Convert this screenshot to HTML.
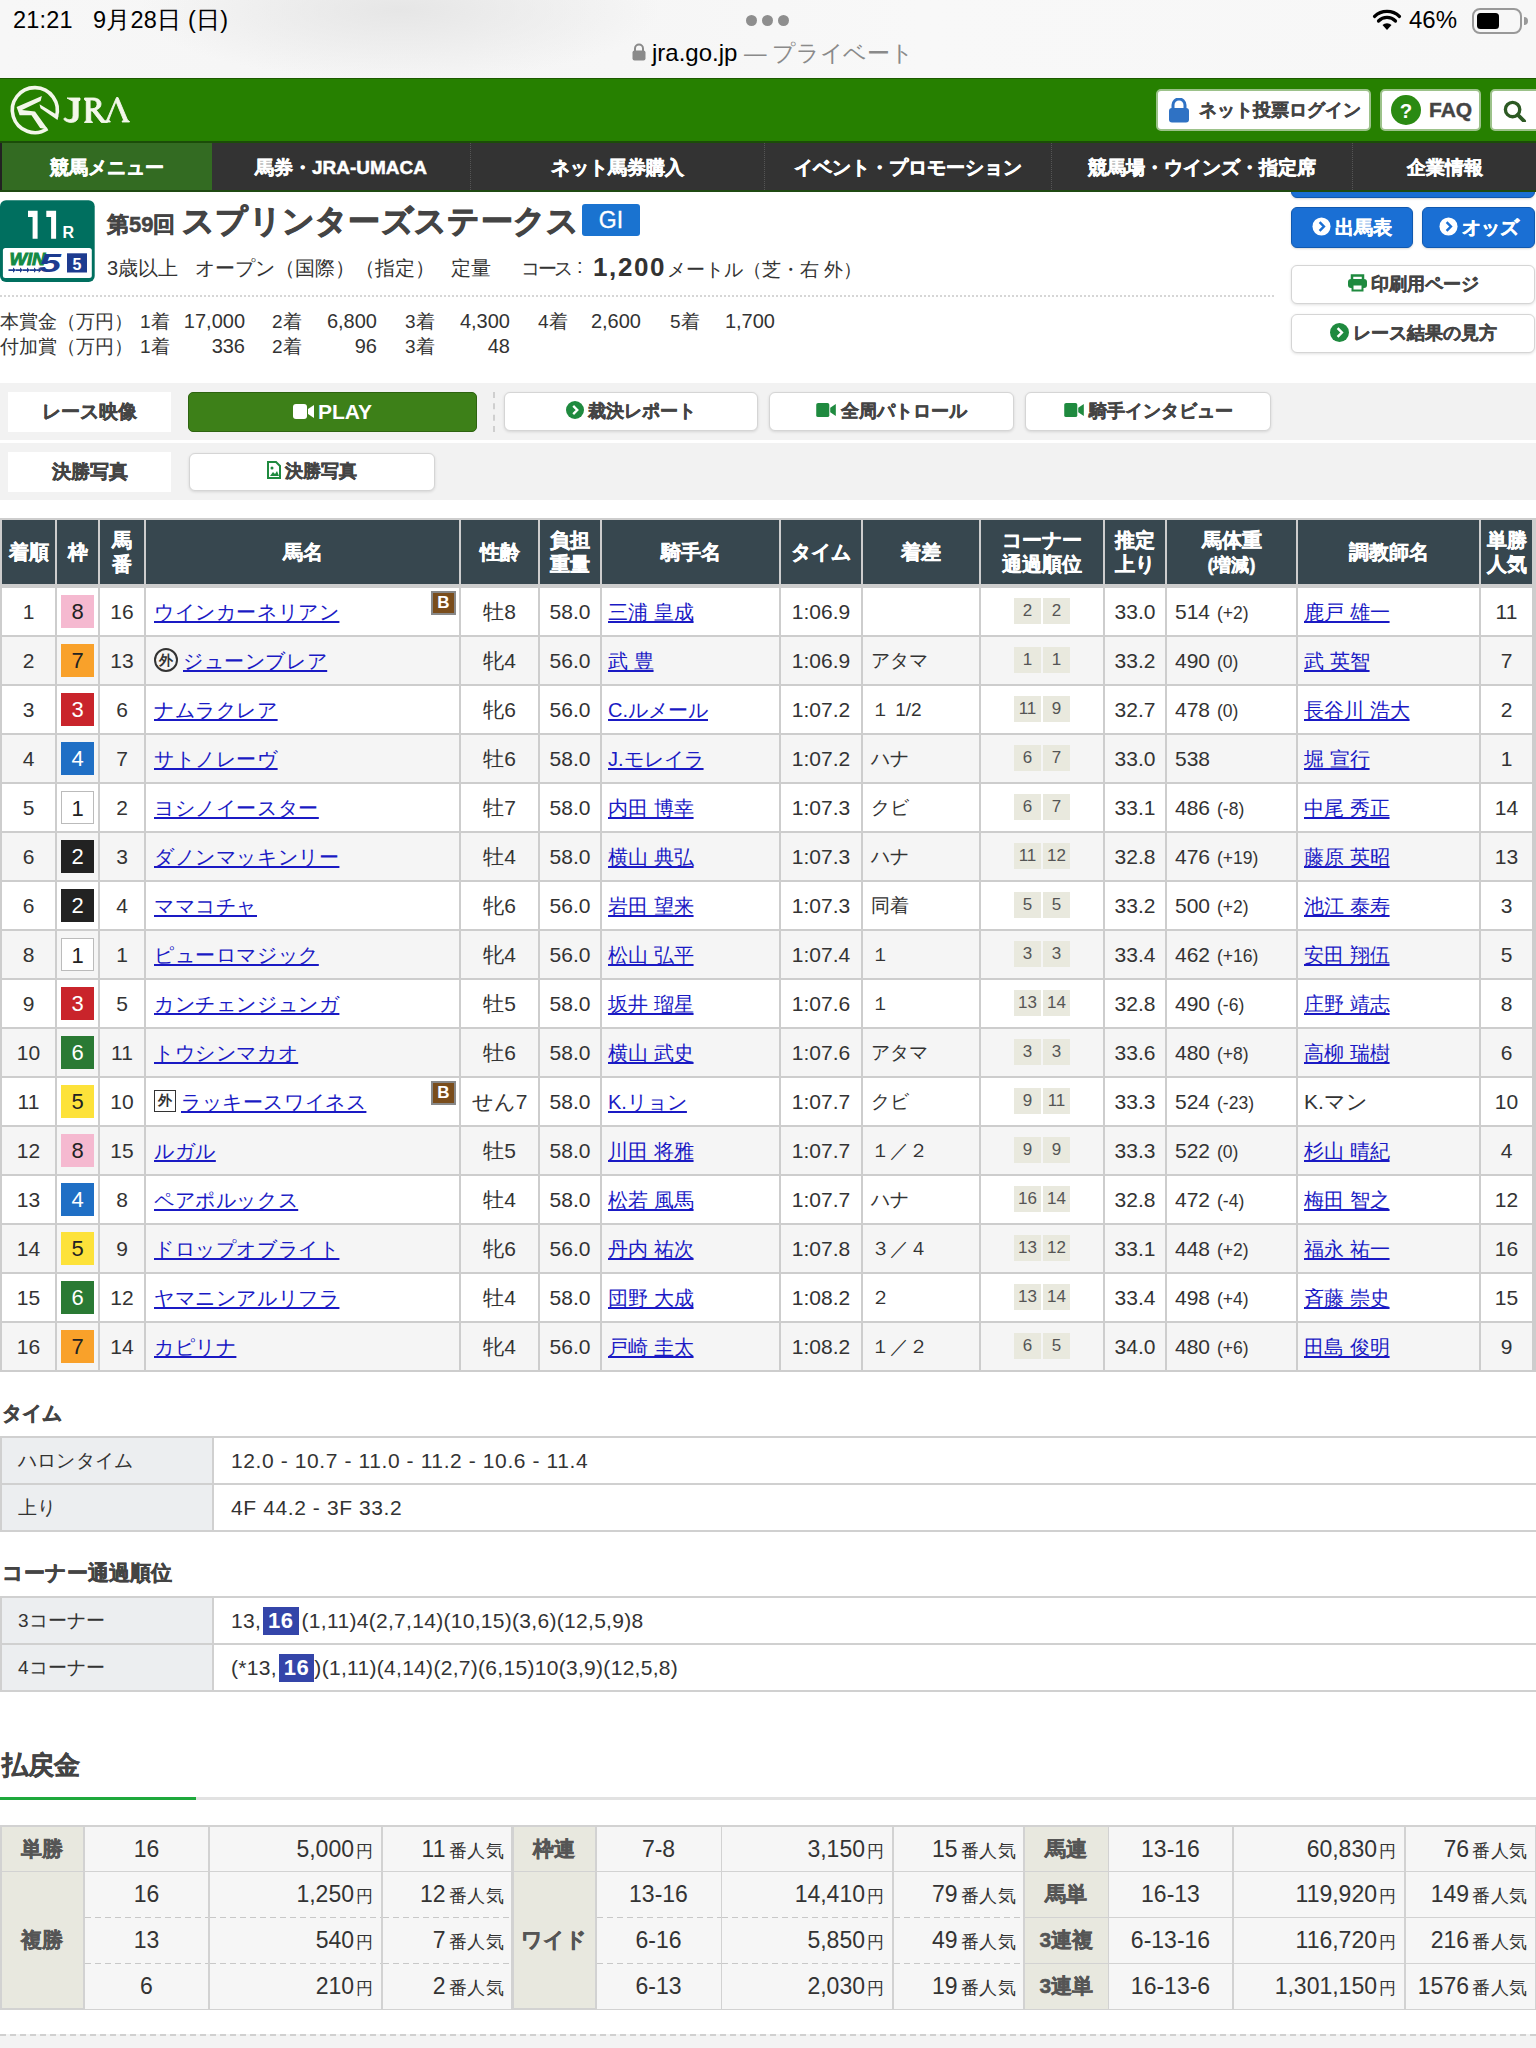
<!DOCTYPE html>
<html lang="ja"><head><meta charset="utf-8">
<style>
*{box-sizing:border-box;margin:0;padding:0}
html,body{width:1536px;height:2048px;overflow:hidden;background:#fff}
body{font-family:"Liberation Sans",sans-serif;color:#333;position:relative}
.abs{position:absolute}
/* status bar */
#sb{left:0;top:0;width:1536px;height:78px;background:radial-gradient(ellipse 260px 70px at 400px 10px,#e6e6e6 0%,rgba(246,246,246,0) 100%),linear-gradient(90deg,#f7f7f7 0%,#f5f5f5 30%,#f8f8f8 60%,#f7f7f7 100%)}
#sb .time{left:13px;top:4px;font-size:23.5px;color:#000;letter-spacing:0.2px}
#sb .dots{left:746px;top:15px;width:44px;height:10px}
#sb .dots i{position:absolute;top:0;width:11px;height:11px;border-radius:50%;background:#8e8e8e}
#sb .url{left:632px;top:38px;font-size:24px;color:#000;white-space:nowrap}
#sb .url span{color:#8a8a8a;font-size:22.5px;letter-spacing:-0.3px}
#sb .bat{right:10px;top:6px;font-size:24px;color:#000}
/* green header */
#gh{left:0;top:78px;width:1536px;height:65px;background:#268000;border-top:1px solid #1d5a00;border-bottom:2px solid #1b4d08}
.hbtn{position:absolute;top:10px;height:42px;background:#fff;border:2px solid #9cc28a;border-radius:5px;font-weight:bold;color:#444;font-size:19px;white-space:nowrap;-webkit-text-stroke:0.4px #444}
/* nav */
#nav{z-index:5;left:0;top:143px;width:1536px;height:49px;background:#333;border-bottom:2px solid #1f4a12}
#nav div{position:absolute;top:0;height:47px;line-height:49px;text-align:center;color:#fff;font-weight:bold;font-size:19px;white-space:nowrap;-webkit-text-stroke:0.5px #fff}
#nav div.sep{border-left:1px dotted #555}
#nav div.on{background:#336b22;border-left:2px solid #222}
/* race header */
#rbox{left:0;top:200px;width:95px;height:82px;background:#006f5f;border-radius:6px}
#rbox .num{left:0;top:4px;width:95px;text-align:center;color:#fff;font-weight:bold;font-size:38px;letter-spacing:-1px}
#rbox .num small{font-size:21px;letter-spacing:0;margin-left:5px}
#rbox .w5{left:3px;top:48px;width:89px;height:30px;background:#fff;border-radius:3px}
.bluebtn{position:absolute;height:41px;background:#1a6fd4;border:1px solid #1059b0;border-radius:6px;color:#fff;font-weight:bold;font-size:19px;text-align:center;line-height:39px;white-space:nowrap;-webkit-text-stroke:0.4px #fff;box-shadow:0 1px 2px rgba(0,0,0,.15)}
.whitebtn{position:absolute;height:39px;background:#fff;border:1.5px solid #d5d5d5;border-radius:6px;color:#444;font-weight:bold;font-size:18px;text-align:center;line-height:36px;white-space:nowrap;-webkit-text-stroke:0.4px #444;box-shadow:0 1px 3px rgba(0,0,0,.12)}
.ico{display:inline-block;vertical-align:middle;position:relative;top:-2px;margin-right:4px}
.info{font-size:20px;color:#333;white-space:nowrap}
.prize{font-size:19px;color:#333;white-space:nowrap;position:absolute}
/* video band */
.band{position:absolute;left:0;width:1536px;background:#f2f2f2}
.lbl{position:absolute;background:#fff;font-weight:bold;font-size:19px;color:#444;-webkit-text-stroke:0.4px #444;text-align:center;line-height:40px}
</style></head><body>
<style>
.tc{position:absolute;overflow:visible}
.th{position:absolute;left:0;right:0;top:50%;transform:translateY(-50%);text-align:center;color:#fff;font-weight:bold;font-size:20px;line-height:24px;white-space:nowrap;-webkit-text-stroke:0.4px #fff}
.tdc{position:absolute;left:0;right:0;top:0;height:47px;line-height:47px;text-align:center;font-size:21px;color:#333;white-space:nowrap}
.tdl{position:absolute;left:6px;top:0;height:47px;line-height:47px;font-size:21px;color:#333;white-space:nowrap}
.tc a{font-size:20px;color:#1a1ac4;text-decoration:underline;text-underline-offset:2px;text-decoration-thickness:2px}
.waku{position:absolute;left:4px;top:7px;width:33px;height:33px;line-height:33px;text-align:center;font-size:22px}
.bb{position:absolute;right:3px;top:3px;width:25px;height:24px;background:#7a4d1c;border:2px solid #888;color:#fff;font-weight:bold;font-size:17px;line-height:20px;text-align:center}
.maru{display:inline-block;width:24px;height:24px;border:2px solid #333;border-radius:50%;font-size:14px;line-height:20px;text-align:center;font-weight:bold;margin-right:5px;vertical-align:middle;position:relative;top:-2px}
.kaku{display:inline-block;width:22px;height:22px;border:1.5px solid #333;font-size:14px;line-height:19px;text-align:center;font-weight:bold;margin-right:5px;vertical-align:middle;position:relative;top:-2px}
.crn{position:absolute;left:33px;top:10px;height:26px}
.crn i{font-style:normal;float:left;width:27px;height:26px;margin-right:2px;background:#e9e9de;font-size:17px;line-height:26px;text-align:center;color:#555}
.bwd{font-size:17.5px;margin-left:7px}
</style>
<div id="sb" class="abs">
  <div class="abs time">21:21&nbsp;&nbsp;&nbsp;9月28日 (日)</div>
  <div class="abs dots"><i style="left:0"></i><i style="left:16px"></i><i style="left:32px"></i></div>
  <div class="abs url"><svg class="ico" width="14" height="18" viewBox="0 0 14 18" style="top:-3px;margin-right:6px"><path d="M3 8V5.5a4 4 0 0 1 8 0V8" fill="none" stroke="#8a8a8a" stroke-width="2"/><rect x="0.5" y="7.5" width="13" height="10" rx="2" fill="#8a8a8a"/></svg>jra.go.jp <span>— プライベート</span></div>
  <svg class="abs" style="left:1372px;top:9px" width="30" height="22" viewBox="0 0 30 22"><path d="M15 21l-4.5-5a6.5 6.5 0 0 1 9 0z" fill="#000"/><path d="M6.5 12a12 12 0 0 1 17 0" fill="none" stroke="#000" stroke-width="3.2" stroke-linecap="round"/><path d="M2.5 7.5a18 18 0 0 1 25 0" fill="none" stroke="#000" stroke-width="3.2" stroke-linecap="round"/></svg>
  <div class="abs" style="left:1409px;top:6px;font-size:24px;color:#000">46%</div>
  <svg class="abs" style="left:1472px;top:8px" width="56" height="26" viewBox="0 0 56 26"><rect x="1" y="1" width="48" height="24" rx="7" fill="none" stroke="#999" stroke-width="2"/><rect x="5" y="5" width="22" height="16" rx="3.5" fill="#000"/><path d="M52 9v8a3 3 0 0 0 0-8z" fill="#999"/></svg>
</div>

<div id="gh" class="abs">
  <svg class="abs" style="left:0;top:0px" width="140" height="62" viewBox="0 79 140 62">
    <path d="M56.2 117.2 A22.5 22.5 0 1 0 47.4 128.8" fill="none" stroke="#f3f7ea" stroke-width="3.6"/>
    <path d="M39.5 104.2 L58.5 115.8 L57.5 120 L40.5 108.2Z" fill="#f3f7ea"/>
    <path d="M41.9 96 L40.6 101 L22 110 L35 111.5 L48 129.5 L40.1 128 L31.5 115.3 L19.6 115.3 L16.6 107Z" fill="#f3f7ea"/>
    <g stroke="#f3f7ea" stroke-width="0.9" stroke-linejoin="round"><path d="M67 98h13v2.2l-1.8 1v15c0 4-3 6.2-7 6.2-3 0-6-1.2-7.5-3.2l1.2-1.5c1.3 1.2 3 2 4.6 2 2.4 0 3.6-1.4 3.6-4.2V101.2l-2.1-1Z" fill="#f3f7ea"/>
    <path d="M84.5 98h8.5c5 0 8 2.3 8 6 0 3-2 5-5 5.8l8.3 10.5 3 1.7v.5h-6l-9-11.6h-1.6v9.6l1.8 1.5v.5h-8v-.5l1.8-1.5V101.2l-1.8-1.5Zm5.6 2v8.7h2c3.2 0 5-1.6 5-4.4 0-2.8-1.7-4.3-5-4.3Z" fill="#f3f7ea"/>
    <path d="M116.5 97.5h1.5l9.5 22.5 2 1.5v.5h-7.5v-.5l1.6-1.5-7.6-18.5-7.3 18.5 1.6 1.5v.5h-5.3v-.5l1.8-1.5Z" fill="#f3f7ea"/></g>
  </svg>
  <div class="hbtn" style="left:1156px;width:215px;padding-left:41px;line-height:38px;font-size:17.5px">
    <svg class="abs" style="left:10px;top:7px" width="22" height="25" viewBox="0 0 22 25"><path d="M5 11V7a6 6 0 0 1 12 0v4" fill="none" stroke="#2f72c4" stroke-width="3"/><rect x="1" y="10" width="20" height="14.5" rx="3" fill="#2f72c4"/></svg>ネット投票ログイン</div>
  <div class="hbtn" style="left:1380px;width:101px;padding-left:47px;line-height:38px;font-size:21px">
    <svg class="abs" style="left:9px;top:4px" width="30" height="30" viewBox="0 0 28 28"><circle cx="14" cy="14" r="14" fill="#2a8a12"/><text x="14" y="21" text-anchor="middle" font-family="Liberation Sans" font-weight="bold" font-size="19" fill="#fff">?</text></svg>FAQ</div>
  <div class="hbtn" style="left:1490px;width:50px">
    <svg class="abs" style="left:10px;top:8px" width="25" height="23" viewBox="0 0 26 24"><circle cx="11" cy="11" r="7.5" fill="none" stroke="#2d5a24" stroke-width="3.5"/><path d="M16.5 16.5L23 23" stroke="#2d5a24" stroke-width="4" stroke-linecap="round"/></svg></div>
</div>

<div id="nav" class="abs">
  <div class="on" style="left:0;width:212px">競馬メニュー</div>
  <div style="left:212px;width:258px">馬券・JRA-UMACA</div>
  <div class="sep" style="left:470px;width:294px">ネット馬券購入</div>
  <div class="sep" style="left:764px;width:287px">イベント・プロモーション</div>
  <div class="sep" style="left:1051px;width:301px">競馬場・ウインズ・指定席</div>
  <div class="sep" style="left:1352px;width:184px">企業情報</div>
</div>
<div class="bluebtn" style="left:1291px;top:188px;width:244px;height:10px;border-radius:0 0 6px 6px"></div>
<svg class="abs" style="left:0;top:198px" width="100" height="88" viewBox="0 198 100 88">
  <rect x="0" y="200.3" width="94.7" height="81.7" rx="6" fill="#006f5f"/>
  <path d="M28 210.7H37.6V238.7H32.6V216.9H28Z M46.3 210.7H56.1V238.7H51.1V216.9H46.3Z" fill="#fff"/>
  <text x="62.5" y="238.3" font-family="Liberation Sans" font-weight="bold" font-size="16" fill="#fff">R</text>
  <rect x="2.9" y="248" width="88.9" height="30" rx="2.5" fill="#fff"/>
  <text x="9.5" y="265.2" font-family="Liberation Sans" font-weight="bold" font-style="italic" font-size="16.5" fill="#138a45" stroke="#138a45" stroke-width="0.9" textLength="36" lengthAdjust="spacingAndGlyphs">WIN</text>
  <text x="39" y="272.3" font-family="Liberation Sans" font-weight="bold" font-style="italic" font-size="26" fill="#1d3b8f" textLength="22" lengthAdjust="spacingAndGlyphs">5</text>
  <g fill="#1d3b8f"><path d="M8.5 269.3h4.5v-1.8l2.8 2.6-2.8 2.6v-1.8H8.5Z"/><path d="M15.5 269.3h4.5v-1.8l2.8 2.6-2.8 2.6v-1.8h-4.5Z"/><path d="M22.5 269.3h4.5v-1.8l2.8 2.6-2.8 2.6v-1.8h-4.5Z"/><path d="M29.5 269.3h4.5v-1.8l2.8 2.6-2.8 2.6v-1.8h-4.5Z"/><path d="M36.2 269.3h2.5v-1.8l2.8 2.6-2.8 2.6v-1.8h-2.5Z"/></g>
  <rect x="67" y="253.3" width="20" height="19.2" fill="#1d3b8f"/>
  <text x="77" y="269.6" text-anchor="middle" font-family="Liberation Sans" font-weight="bold" font-size="16" fill="#fff">5</text>
</svg>
<div class="abs" style="left:107px;top:210px;font-size:22px;font-weight:bold;color:#444;white-space:nowrap;-webkit-text-stroke:0.5px #444">第59回</div>
<div class="abs" style="left:182px;top:200px;font-size:32px;font-weight:bold;color:#444;white-space:nowrap;letter-spacing:0.3px;-webkit-text-stroke:1px #444">スプリンターズステークス</div>
<div class="abs" style="left:582px;top:204px;width:58px;height:32px;background:#1a73d0;border-radius:3px;color:#fff;font-size:23px;text-align:center;line-height:32px;-webkit-text-stroke:0.3px #fff">GI</div>
<div class="abs info" style="left:107px;top:255px">3歳以上&nbsp;&nbsp;&nbsp;オープン（国際）（指定）&nbsp;&nbsp;&nbsp;定量</div>
<div class="abs info" style="left:521px;top:256px;font-size:19px;letter-spacing:-2.5px">コース</div><div class="abs info" style="left:577px;top:255px">:</div>
<div class="abs" style="left:593px;top:252px;font-size:26px;font-weight:bold;color:#333;letter-spacing:1.6px">1,200</div>
<div class="abs info" style="left:667px;top:257px;font-size:19px">メートル（芝・右 外）</div>
<div class="abs" style="left:0;top:295px;width:1275px;height:0;height:2px;background:repeating-linear-gradient(90deg,#d6d6d6 0 2px,transparent 2px 4px)"></div>

<div class="prize" style="left:0;top:309px">本賞金（万円）</div>
<div class="prize" style="left:0;top:334px">付加賞（万円）</div>
<div class="prize" style="left:140px;top:309px">1着</div><div class="prize" style="left:165px;width:80px;top:310px;text-align:right;font-size:20px">17,000</div>
<div class="prize" style="left:272px;top:309px">2着</div><div class="prize" style="left:297px;width:80px;top:310px;text-align:right;font-size:20px">6,800</div>
<div class="prize" style="left:405px;top:309px">3着</div><div class="prize" style="left:430px;width:80px;top:310px;text-align:right;font-size:20px">4,300</div>
<div class="prize" style="left:538px;top:309px">4着</div><div class="prize" style="left:561px;width:80px;top:310px;text-align:right;font-size:20px">2,600</div>
<div class="prize" style="left:670px;top:309px">5着</div><div class="prize" style="left:695px;width:80px;top:310px;text-align:right;font-size:20px">1,700</div>
<div class="prize" style="left:140px;top:334px">1着</div><div class="prize" style="left:165px;width:80px;top:335px;text-align:right;font-size:20px">336</div>
<div class="prize" style="left:272px;top:334px">2着</div><div class="prize" style="left:297px;width:80px;top:335px;text-align:right;font-size:20px">96</div>
<div class="prize" style="left:405px;top:334px">3着</div><div class="prize" style="left:430px;width:80px;top:335px;text-align:right;font-size:20px">48</div>

<div class="bluebtn" style="left:1291px;top:207px;width:122px">
  <svg class="ico" width="19" height="19" viewBox="0 0 20 20"><circle cx="10" cy="10" r="9.5" fill="#fff"/><path d="M8 5.5L12.5 10L8 14.5" fill="none" stroke="#1a6fd4" stroke-width="2.6"/></svg>出馬表</div>
<div class="bluebtn" style="left:1422px;top:207px;width:113px">
  <svg class="ico" width="19" height="19" viewBox="0 0 20 20"><circle cx="10" cy="10" r="9.5" fill="#fff"/><path d="M8 5.5L12.5 10L8 14.5" fill="none" stroke="#1a6fd4" stroke-width="2.6"/></svg>オッズ</div>
<div class="whitebtn" style="left:1291px;top:265px;width:244px">
  <svg class="ico" width="19" height="18" viewBox="0 0 19 18"><path d="M4 5V1.5h11V5" fill="none" stroke="#1f8a3f" stroke-width="2.5"/><rect x="0" y="5" width="19" height="9" rx="3" fill="#1f8a3f"/><rect x="4.5" y="10.5" width="10" height="6" fill="#fff" stroke="#1f8a3f" stroke-width="2"/></svg>印刷用ページ</div>
<div class="whitebtn" style="left:1291px;top:314px;width:244px">
  <svg class="ico" width="19" height="19" viewBox="0 0 20 20"><circle cx="10" cy="10" r="10" fill="#1f8a3f"/><path d="M8 5.5L12.5 10L8 14.5" fill="none" stroke="#fff" stroke-width="2.6"/></svg>レース結果の見方</div>

<div class="band" style="top:383px;height:57px"></div>
<div class="band" style="top:443px;height:57px"></div>
<div class="lbl" style="left:8px;top:392px;width:163px;height:40px">レース映像</div>
<div class="lbl" style="left:8px;top:452px;width:163px;height:40px">決勝写真</div>
<div class="abs" style="left:188px;top:392px;width:289px;height:40px;background:#3d8018;border:1px solid #2d6310;border-radius:5px;color:#fff;font-weight:bold;font-size:21px;text-align:center;line-height:38px">
  <svg class="ico" width="22" height="15" viewBox="0 0 22 15" style="top:-2px;margin-right:3px"><rect x="0" y="0" width="14" height="15" rx="3" fill="#fff"/><path d="M15 5L21 1v13l-6-4z" fill="#fff"/></svg>PLAY</div>
<div class="abs" style="left:493px;top:392px;height:40px;border-left:2px dashed #cfcfcf"></div>
<div class="whitebtn" style="left:504px;top:392px;width:254px">
  <svg class="ico" width="18" height="18" viewBox="0 0 20 20"><circle cx="10" cy="10" r="10" fill="#1f8a3f"/><path d="M8 5.5L12.5 10L8 14.5" fill="none" stroke="#fff" stroke-width="2.6"/></svg>裁決レポート</div>
<div class="whitebtn" style="left:769px;top:392px;width:245px">
  <svg class="ico" width="21" height="14" viewBox="0 0 22 15"><rect x="0" y="0" width="14" height="15" rx="2" fill="#1f8a3f"/><path d="M15 5L21 1v13l-6-4z" fill="#1f8a3f"/></svg>全周パトロール</div>
<div class="whitebtn" style="left:1025px;top:392px;width:246px">
  <svg class="ico" width="21" height="14" viewBox="0 0 22 15"><rect x="0" y="0" width="14" height="15" rx="2" fill="#1f8a3f"/><path d="M15 5L21 1v13l-6-4z" fill="#1f8a3f"/></svg>騎手インタビュー</div>
<div class="whitebtn" style="left:189px;top:453px;width:246px;height:38px;line-height:35px">
  <svg class="ico" width="14" height="18" viewBox="0 0 14 18"><path d="M1 1h8l4 4v12H1z" fill="#fff" stroke="#1f8a3f" stroke-width="2"/><path d="M3 15l3-4 2 2 2-3 2 5z" fill="#1f8a3f"/><circle cx="5" cy="7" r="1.5" fill="#1f8a3f"/></svg>決勝写真</div>
<div class="abs" style="left:0;top:518px;width:1536px;height:854px;background:#cdcdcd"></div>
<div class="tc" style="left:2px;top:520px;width:53px;height:64px;background:#37474f;"><div class="th">着順</div></div>
<div class="tc" style="left:57px;top:520px;width:41px;height:64px;background:#37474f;"><div class="th">枠</div></div>
<div class="tc" style="left:100px;top:520px;width:44px;height:64px;background:#37474f;"><div class="th">馬<br>番</div></div>
<div class="tc" style="left:146px;top:520px;width:313px;height:64px;background:#37474f;"><div class="th">馬名</div></div>
<div class="tc" style="left:461px;top:520px;width:77px;height:64px;background:#37474f;"><div class="th">性齢</div></div>
<div class="tc" style="left:540px;top:520px;width:60px;height:64px;background:#37474f;"><div class="th">負担<br>重量</div></div>
<div class="tc" style="left:602px;top:520px;width:177px;height:64px;background:#37474f;"><div class="th">騎手名</div></div>
<div class="tc" style="left:781px;top:520px;width:80px;height:64px;background:#37474f;"><div class="th">タイム</div></div>
<div class="tc" style="left:863px;top:520px;width:116px;height:64px;background:#37474f;"><div class="th">着差</div></div>
<div class="tc" style="left:981px;top:520px;width:122px;height:64px;background:#37474f;"><div class="th">コーナー<br>通過順位</div></div>
<div class="tc" style="left:1105px;top:520px;width:60px;height:64px;background:#37474f;"><div class="th">推定<br>上り</div></div>
<div class="tc" style="left:1167px;top:520px;width:129px;height:64px;background:#37474f;"><div class="th">馬体重<br><span style="font-size:18px">(増減)</span></div></div>
<div class="tc" style="left:1298px;top:520px;width:181px;height:64px;background:#37474f;"><div class="th">調教師名</div></div>
<div class="tc" style="left:1481px;top:520px;width:51px;height:64px;background:#37474f;"><div class="th">単勝<br>人気</div></div>
<div class="tc" style="left:2px;top:588px;width:53px;height:47px;background:#fff;"><div class="tdc">1</div></div>
<div class="tc" style="left:57px;top:588px;width:41px;height:47px;background:#fff;"><div class="waku" style="background:#f5b9d0;color:#222;">8</div></div>
<div class="tc" style="left:100px;top:588px;width:44px;height:47px;background:#fff;"><div class="tdc">16</div></div>
<div class="tc" style="left:146px;top:588px;width:313px;height:47px;background:#fff;"><div class="tdl" style="left:8px"><a style="letter-spacing:0.6px">ウインカーネリアン </a></div><span class="bb">B</span></div>
<div class="tc" style="left:461px;top:588px;width:77px;height:47px;background:#fff;"><div class="tdc">牡8</div></div>
<div class="tc" style="left:540px;top:588px;width:60px;height:47px;background:#fff;"><div class="tdc">58.0</div></div>
<div class="tc" style="left:602px;top:588px;width:177px;height:47px;background:#fff;"><div class="tdl"><a>三浦 皇成</a></div></div>
<div class="tc" style="left:781px;top:588px;width:80px;height:47px;background:#fff;"><div class="tdc">1:06.9</div></div>
<div class="tc" style="left:863px;top:588px;width:116px;height:47px;background:#fff;"><div class="tdl" style="left:8px;font-size:19px"></div></div>
<div class="tc" style="left:981px;top:588px;width:122px;height:47px;background:#fff;"><div class="crn"><i>2</i><i>2</i></div></div>
<div class="tc" style="left:1105px;top:588px;width:60px;height:47px;background:#fff;"><div class="tdc">33.0</div></div>
<div class="tc" style="left:1167px;top:588px;width:129px;height:47px;background:#fff;"><div class="tdl" style="left:8px">514<span class="bwd">(+2)</span></div></div>
<div class="tc" style="left:1298px;top:588px;width:181px;height:47px;background:#fff;"><div class="tdl"><a>鹿戸 雄一</a></div></div>
<div class="tc" style="left:1481px;top:588px;width:51px;height:47px;background:#fff;"><div class="tdc">11</div></div>
<div class="tc" style="left:2px;top:637px;width:53px;height:47px;background:#f5f5f5;"><div class="tdc">2</div></div>
<div class="tc" style="left:57px;top:637px;width:41px;height:47px;background:#f5f5f5;"><div class="waku" style="background:#f9a12a;color:#222;">7</div></div>
<div class="tc" style="left:100px;top:637px;width:44px;height:47px;background:#f5f5f5;"><div class="tdc">13</div></div>
<div class="tc" style="left:146px;top:637px;width:313px;height:47px;background:#f5f5f5;"><div class="tdl" style="left:8px"><span class="maru">外</span><a style="letter-spacing:0.6px">ジューンブレア </a></div></div>
<div class="tc" style="left:461px;top:637px;width:77px;height:47px;background:#f5f5f5;"><div class="tdc">牝4</div></div>
<div class="tc" style="left:540px;top:637px;width:60px;height:47px;background:#f5f5f5;"><div class="tdc">56.0</div></div>
<div class="tc" style="left:602px;top:637px;width:177px;height:47px;background:#f5f5f5;"><div class="tdl"><a>武 豊</a></div></div>
<div class="tc" style="left:781px;top:637px;width:80px;height:47px;background:#f5f5f5;"><div class="tdc">1:06.9</div></div>
<div class="tc" style="left:863px;top:637px;width:116px;height:47px;background:#f5f5f5;"><div class="tdl" style="left:8px;font-size:19px">アタマ</div></div>
<div class="tc" style="left:981px;top:637px;width:122px;height:47px;background:#f5f5f5;"><div class="crn"><i>1</i><i>1</i></div></div>
<div class="tc" style="left:1105px;top:637px;width:60px;height:47px;background:#f5f5f5;"><div class="tdc">33.2</div></div>
<div class="tc" style="left:1167px;top:637px;width:129px;height:47px;background:#f5f5f5;"><div class="tdl" style="left:8px">490<span class="bwd">(0)</span></div></div>
<div class="tc" style="left:1298px;top:637px;width:181px;height:47px;background:#f5f5f5;"><div class="tdl"><a>武 英智</a></div></div>
<div class="tc" style="left:1481px;top:637px;width:51px;height:47px;background:#f5f5f5;"><div class="tdc">7</div></div>
<div class="tc" style="left:2px;top:686px;width:53px;height:47px;background:#fff;"><div class="tdc">3</div></div>
<div class="tc" style="left:57px;top:686px;width:41px;height:47px;background:#fff;"><div class="waku" style="background:#c9242b;color:#fff;">3</div></div>
<div class="tc" style="left:100px;top:686px;width:44px;height:47px;background:#fff;"><div class="tdc">6</div></div>
<div class="tc" style="left:146px;top:686px;width:313px;height:47px;background:#fff;"><div class="tdl" style="left:8px"><a style="letter-spacing:0.6px">ナムラクレア </a></div></div>
<div class="tc" style="left:461px;top:686px;width:77px;height:47px;background:#fff;"><div class="tdc">牝6</div></div>
<div class="tc" style="left:540px;top:686px;width:60px;height:47px;background:#fff;"><div class="tdc">56.0</div></div>
<div class="tc" style="left:602px;top:686px;width:177px;height:47px;background:#fff;"><div class="tdl"><a>C.ルメール</a></div></div>
<div class="tc" style="left:781px;top:686px;width:80px;height:47px;background:#fff;"><div class="tdc">1:07.2</div></div>
<div class="tc" style="left:863px;top:686px;width:116px;height:47px;background:#fff;"><div class="tdl" style="left:8px;font-size:19px">１ 1/2</div></div>
<div class="tc" style="left:981px;top:686px;width:122px;height:47px;background:#fff;"><div class="crn"><i>11</i><i>9</i></div></div>
<div class="tc" style="left:1105px;top:686px;width:60px;height:47px;background:#fff;"><div class="tdc">32.7</div></div>
<div class="tc" style="left:1167px;top:686px;width:129px;height:47px;background:#fff;"><div class="tdl" style="left:8px">478<span class="bwd">(0)</span></div></div>
<div class="tc" style="left:1298px;top:686px;width:181px;height:47px;background:#fff;"><div class="tdl"><a>長谷川 浩大</a></div></div>
<div class="tc" style="left:1481px;top:686px;width:51px;height:47px;background:#fff;"><div class="tdc">2</div></div>
<div class="tc" style="left:2px;top:735px;width:53px;height:47px;background:#f5f5f5;"><div class="tdc">4</div></div>
<div class="tc" style="left:57px;top:735px;width:41px;height:47px;background:#f5f5f5;"><div class="waku" style="background:#1f6fc5;color:#fff;">4</div></div>
<div class="tc" style="left:100px;top:735px;width:44px;height:47px;background:#f5f5f5;"><div class="tdc">7</div></div>
<div class="tc" style="left:146px;top:735px;width:313px;height:47px;background:#f5f5f5;"><div class="tdl" style="left:8px"><a style="letter-spacing:0.6px">サトノレーヴ </a></div></div>
<div class="tc" style="left:461px;top:735px;width:77px;height:47px;background:#f5f5f5;"><div class="tdc">牡6</div></div>
<div class="tc" style="left:540px;top:735px;width:60px;height:47px;background:#f5f5f5;"><div class="tdc">58.0</div></div>
<div class="tc" style="left:602px;top:735px;width:177px;height:47px;background:#f5f5f5;"><div class="tdl"><a>J.モレイラ</a></div></div>
<div class="tc" style="left:781px;top:735px;width:80px;height:47px;background:#f5f5f5;"><div class="tdc">1:07.2</div></div>
<div class="tc" style="left:863px;top:735px;width:116px;height:47px;background:#f5f5f5;"><div class="tdl" style="left:8px;font-size:19px">ハナ</div></div>
<div class="tc" style="left:981px;top:735px;width:122px;height:47px;background:#f5f5f5;"><div class="crn"><i>6</i><i>7</i></div></div>
<div class="tc" style="left:1105px;top:735px;width:60px;height:47px;background:#f5f5f5;"><div class="tdc">33.0</div></div>
<div class="tc" style="left:1167px;top:735px;width:129px;height:47px;background:#f5f5f5;"><div class="tdl" style="left:8px">538<span class="bwd"></span></div></div>
<div class="tc" style="left:1298px;top:735px;width:181px;height:47px;background:#f5f5f5;"><div class="tdl"><a>堀 宣行</a></div></div>
<div class="tc" style="left:1481px;top:735px;width:51px;height:47px;background:#f5f5f5;"><div class="tdc">1</div></div>
<div class="tc" style="left:2px;top:784px;width:53px;height:47px;background:#fff;"><div class="tdc">5</div></div>
<div class="tc" style="left:57px;top:784px;width:41px;height:47px;background:#fff;"><div class="waku" style="background:#fff;color:#222;border:1px solid #bbb;">1</div></div>
<div class="tc" style="left:100px;top:784px;width:44px;height:47px;background:#fff;"><div class="tdc">2</div></div>
<div class="tc" style="left:146px;top:784px;width:313px;height:47px;background:#fff;"><div class="tdl" style="left:8px"><a style="letter-spacing:0.6px">ヨシノイースター </a></div></div>
<div class="tc" style="left:461px;top:784px;width:77px;height:47px;background:#fff;"><div class="tdc">牡7</div></div>
<div class="tc" style="left:540px;top:784px;width:60px;height:47px;background:#fff;"><div class="tdc">58.0</div></div>
<div class="tc" style="left:602px;top:784px;width:177px;height:47px;background:#fff;"><div class="tdl"><a>内田 博幸</a></div></div>
<div class="tc" style="left:781px;top:784px;width:80px;height:47px;background:#fff;"><div class="tdc">1:07.3</div></div>
<div class="tc" style="left:863px;top:784px;width:116px;height:47px;background:#fff;"><div class="tdl" style="left:8px;font-size:19px">クビ</div></div>
<div class="tc" style="left:981px;top:784px;width:122px;height:47px;background:#fff;"><div class="crn"><i>6</i><i>7</i></div></div>
<div class="tc" style="left:1105px;top:784px;width:60px;height:47px;background:#fff;"><div class="tdc">33.1</div></div>
<div class="tc" style="left:1167px;top:784px;width:129px;height:47px;background:#fff;"><div class="tdl" style="left:8px">486<span class="bwd">(-8)</span></div></div>
<div class="tc" style="left:1298px;top:784px;width:181px;height:47px;background:#fff;"><div class="tdl"><a>中尾 秀正</a></div></div>
<div class="tc" style="left:1481px;top:784px;width:51px;height:47px;background:#fff;"><div class="tdc">14</div></div>
<div class="tc" style="left:2px;top:833px;width:53px;height:47px;background:#f5f5f5;"><div class="tdc">6</div></div>
<div class="tc" style="left:57px;top:833px;width:41px;height:47px;background:#f5f5f5;"><div class="waku" style="background:#222;color:#fff;">2</div></div>
<div class="tc" style="left:100px;top:833px;width:44px;height:47px;background:#f5f5f5;"><div class="tdc">3</div></div>
<div class="tc" style="left:146px;top:833px;width:313px;height:47px;background:#f5f5f5;"><div class="tdl" style="left:8px"><a style="letter-spacing:0.6px">ダノンマッキンリー </a></div></div>
<div class="tc" style="left:461px;top:833px;width:77px;height:47px;background:#f5f5f5;"><div class="tdc">牡4</div></div>
<div class="tc" style="left:540px;top:833px;width:60px;height:47px;background:#f5f5f5;"><div class="tdc">58.0</div></div>
<div class="tc" style="left:602px;top:833px;width:177px;height:47px;background:#f5f5f5;"><div class="tdl"><a>横山 典弘</a></div></div>
<div class="tc" style="left:781px;top:833px;width:80px;height:47px;background:#f5f5f5;"><div class="tdc">1:07.3</div></div>
<div class="tc" style="left:863px;top:833px;width:116px;height:47px;background:#f5f5f5;"><div class="tdl" style="left:8px;font-size:19px">ハナ</div></div>
<div class="tc" style="left:981px;top:833px;width:122px;height:47px;background:#f5f5f5;"><div class="crn"><i>11</i><i>12</i></div></div>
<div class="tc" style="left:1105px;top:833px;width:60px;height:47px;background:#f5f5f5;"><div class="tdc">32.8</div></div>
<div class="tc" style="left:1167px;top:833px;width:129px;height:47px;background:#f5f5f5;"><div class="tdl" style="left:8px">476<span class="bwd">(+19)</span></div></div>
<div class="tc" style="left:1298px;top:833px;width:181px;height:47px;background:#f5f5f5;"><div class="tdl"><a>藤原 英昭</a></div></div>
<div class="tc" style="left:1481px;top:833px;width:51px;height:47px;background:#f5f5f5;"><div class="tdc">13</div></div>
<div class="tc" style="left:2px;top:882px;width:53px;height:47px;background:#fff;"><div class="tdc">6</div></div>
<div class="tc" style="left:57px;top:882px;width:41px;height:47px;background:#fff;"><div class="waku" style="background:#222;color:#fff;">2</div></div>
<div class="tc" style="left:100px;top:882px;width:44px;height:47px;background:#fff;"><div class="tdc">4</div></div>
<div class="tc" style="left:146px;top:882px;width:313px;height:47px;background:#fff;"><div class="tdl" style="left:8px"><a style="letter-spacing:0.6px">ママコチャ </a></div></div>
<div class="tc" style="left:461px;top:882px;width:77px;height:47px;background:#fff;"><div class="tdc">牝6</div></div>
<div class="tc" style="left:540px;top:882px;width:60px;height:47px;background:#fff;"><div class="tdc">56.0</div></div>
<div class="tc" style="left:602px;top:882px;width:177px;height:47px;background:#fff;"><div class="tdl"><a>岩田 望来</a></div></div>
<div class="tc" style="left:781px;top:882px;width:80px;height:47px;background:#fff;"><div class="tdc">1:07.3</div></div>
<div class="tc" style="left:863px;top:882px;width:116px;height:47px;background:#fff;"><div class="tdl" style="left:8px;font-size:19px">同着</div></div>
<div class="tc" style="left:981px;top:882px;width:122px;height:47px;background:#fff;"><div class="crn"><i>5</i><i>5</i></div></div>
<div class="tc" style="left:1105px;top:882px;width:60px;height:47px;background:#fff;"><div class="tdc">33.2</div></div>
<div class="tc" style="left:1167px;top:882px;width:129px;height:47px;background:#fff;"><div class="tdl" style="left:8px">500<span class="bwd">(+2)</span></div></div>
<div class="tc" style="left:1298px;top:882px;width:181px;height:47px;background:#fff;"><div class="tdl"><a>池江 泰寿</a></div></div>
<div class="tc" style="left:1481px;top:882px;width:51px;height:47px;background:#fff;"><div class="tdc">3</div></div>
<div class="tc" style="left:2px;top:931px;width:53px;height:47px;background:#f5f5f5;"><div class="tdc">8</div></div>
<div class="tc" style="left:57px;top:931px;width:41px;height:47px;background:#f5f5f5;"><div class="waku" style="background:#fff;color:#222;border:1px solid #bbb;">1</div></div>
<div class="tc" style="left:100px;top:931px;width:44px;height:47px;background:#f5f5f5;"><div class="tdc">1</div></div>
<div class="tc" style="left:146px;top:931px;width:313px;height:47px;background:#f5f5f5;"><div class="tdl" style="left:8px"><a style="letter-spacing:0.6px">ピューロマジック </a></div></div>
<div class="tc" style="left:461px;top:931px;width:77px;height:47px;background:#f5f5f5;"><div class="tdc">牝4</div></div>
<div class="tc" style="left:540px;top:931px;width:60px;height:47px;background:#f5f5f5;"><div class="tdc">56.0</div></div>
<div class="tc" style="left:602px;top:931px;width:177px;height:47px;background:#f5f5f5;"><div class="tdl"><a>松山 弘平</a></div></div>
<div class="tc" style="left:781px;top:931px;width:80px;height:47px;background:#f5f5f5;"><div class="tdc">1:07.4</div></div>
<div class="tc" style="left:863px;top:931px;width:116px;height:47px;background:#f5f5f5;"><div class="tdl" style="left:8px;font-size:19px">１</div></div>
<div class="tc" style="left:981px;top:931px;width:122px;height:47px;background:#f5f5f5;"><div class="crn"><i>3</i><i>3</i></div></div>
<div class="tc" style="left:1105px;top:931px;width:60px;height:47px;background:#f5f5f5;"><div class="tdc">33.4</div></div>
<div class="tc" style="left:1167px;top:931px;width:129px;height:47px;background:#f5f5f5;"><div class="tdl" style="left:8px">462<span class="bwd">(+16)</span></div></div>
<div class="tc" style="left:1298px;top:931px;width:181px;height:47px;background:#f5f5f5;"><div class="tdl"><a>安田 翔伍</a></div></div>
<div class="tc" style="left:1481px;top:931px;width:51px;height:47px;background:#f5f5f5;"><div class="tdc">5</div></div>
<div class="tc" style="left:2px;top:980px;width:53px;height:47px;background:#fff;"><div class="tdc">9</div></div>
<div class="tc" style="left:57px;top:980px;width:41px;height:47px;background:#fff;"><div class="waku" style="background:#c9242b;color:#fff;">3</div></div>
<div class="tc" style="left:100px;top:980px;width:44px;height:47px;background:#fff;"><div class="tdc">5</div></div>
<div class="tc" style="left:146px;top:980px;width:313px;height:47px;background:#fff;"><div class="tdl" style="left:8px"><a style="letter-spacing:0.6px">カンチェンジュンガ </a></div></div>
<div class="tc" style="left:461px;top:980px;width:77px;height:47px;background:#fff;"><div class="tdc">牡5</div></div>
<div class="tc" style="left:540px;top:980px;width:60px;height:47px;background:#fff;"><div class="tdc">58.0</div></div>
<div class="tc" style="left:602px;top:980px;width:177px;height:47px;background:#fff;"><div class="tdl"><a>坂井 瑠星</a></div></div>
<div class="tc" style="left:781px;top:980px;width:80px;height:47px;background:#fff;"><div class="tdc">1:07.6</div></div>
<div class="tc" style="left:863px;top:980px;width:116px;height:47px;background:#fff;"><div class="tdl" style="left:8px;font-size:19px">１</div></div>
<div class="tc" style="left:981px;top:980px;width:122px;height:47px;background:#fff;"><div class="crn"><i>13</i><i>14</i></div></div>
<div class="tc" style="left:1105px;top:980px;width:60px;height:47px;background:#fff;"><div class="tdc">32.8</div></div>
<div class="tc" style="left:1167px;top:980px;width:129px;height:47px;background:#fff;"><div class="tdl" style="left:8px">490<span class="bwd">(-6)</span></div></div>
<div class="tc" style="left:1298px;top:980px;width:181px;height:47px;background:#fff;"><div class="tdl"><a>庄野 靖志</a></div></div>
<div class="tc" style="left:1481px;top:980px;width:51px;height:47px;background:#fff;"><div class="tdc">8</div></div>
<div class="tc" style="left:2px;top:1029px;width:53px;height:47px;background:#f5f5f5;"><div class="tdc">10</div></div>
<div class="tc" style="left:57px;top:1029px;width:41px;height:47px;background:#f5f5f5;"><div class="waku" style="background:#2a7a34;color:#fff;">6</div></div>
<div class="tc" style="left:100px;top:1029px;width:44px;height:47px;background:#f5f5f5;"><div class="tdc">11</div></div>
<div class="tc" style="left:146px;top:1029px;width:313px;height:47px;background:#f5f5f5;"><div class="tdl" style="left:8px"><a style="letter-spacing:0.6px">トウシンマカオ </a></div></div>
<div class="tc" style="left:461px;top:1029px;width:77px;height:47px;background:#f5f5f5;"><div class="tdc">牡6</div></div>
<div class="tc" style="left:540px;top:1029px;width:60px;height:47px;background:#f5f5f5;"><div class="tdc">58.0</div></div>
<div class="tc" style="left:602px;top:1029px;width:177px;height:47px;background:#f5f5f5;"><div class="tdl"><a>横山 武史</a></div></div>
<div class="tc" style="left:781px;top:1029px;width:80px;height:47px;background:#f5f5f5;"><div class="tdc">1:07.6</div></div>
<div class="tc" style="left:863px;top:1029px;width:116px;height:47px;background:#f5f5f5;"><div class="tdl" style="left:8px;font-size:19px">アタマ</div></div>
<div class="tc" style="left:981px;top:1029px;width:122px;height:47px;background:#f5f5f5;"><div class="crn"><i>3</i><i>3</i></div></div>
<div class="tc" style="left:1105px;top:1029px;width:60px;height:47px;background:#f5f5f5;"><div class="tdc">33.6</div></div>
<div class="tc" style="left:1167px;top:1029px;width:129px;height:47px;background:#f5f5f5;"><div class="tdl" style="left:8px">480<span class="bwd">(+8)</span></div></div>
<div class="tc" style="left:1298px;top:1029px;width:181px;height:47px;background:#f5f5f5;"><div class="tdl"><a>高柳 瑞樹</a></div></div>
<div class="tc" style="left:1481px;top:1029px;width:51px;height:47px;background:#f5f5f5;"><div class="tdc">6</div></div>
<div class="tc" style="left:2px;top:1078px;width:53px;height:47px;background:#fff;"><div class="tdc">11</div></div>
<div class="tc" style="left:57px;top:1078px;width:41px;height:47px;background:#fff;"><div class="waku" style="background:#fde23a;color:#222;">5</div></div>
<div class="tc" style="left:100px;top:1078px;width:44px;height:47px;background:#fff;"><div class="tdc">10</div></div>
<div class="tc" style="left:146px;top:1078px;width:313px;height:47px;background:#fff;"><div class="tdl" style="left:8px"><span class="kaku">外</span><a style="letter-spacing:0.6px">ラッキースワイネス </a></div><span class="bb">B</span></div>
<div class="tc" style="left:461px;top:1078px;width:77px;height:47px;background:#fff;"><div class="tdc">せん7</div></div>
<div class="tc" style="left:540px;top:1078px;width:60px;height:47px;background:#fff;"><div class="tdc">58.0</div></div>
<div class="tc" style="left:602px;top:1078px;width:177px;height:47px;background:#fff;"><div class="tdl"><a>K.リョン</a></div></div>
<div class="tc" style="left:781px;top:1078px;width:80px;height:47px;background:#fff;"><div class="tdc">1:07.7</div></div>
<div class="tc" style="left:863px;top:1078px;width:116px;height:47px;background:#fff;"><div class="tdl" style="left:8px;font-size:19px">クビ</div></div>
<div class="tc" style="left:981px;top:1078px;width:122px;height:47px;background:#fff;"><div class="crn"><i>9</i><i>11</i></div></div>
<div class="tc" style="left:1105px;top:1078px;width:60px;height:47px;background:#fff;"><div class="tdc">33.3</div></div>
<div class="tc" style="left:1167px;top:1078px;width:129px;height:47px;background:#fff;"><div class="tdl" style="left:8px">524<span class="bwd">(-23)</span></div></div>
<div class="tc" style="left:1298px;top:1078px;width:181px;height:47px;background:#fff;"><div class="tdl">K.マン</div></div>
<div class="tc" style="left:1481px;top:1078px;width:51px;height:47px;background:#fff;"><div class="tdc">10</div></div>
<div class="tc" style="left:2px;top:1127px;width:53px;height:47px;background:#f5f5f5;"><div class="tdc">12</div></div>
<div class="tc" style="left:57px;top:1127px;width:41px;height:47px;background:#f5f5f5;"><div class="waku" style="background:#f5b9d0;color:#222;">8</div></div>
<div class="tc" style="left:100px;top:1127px;width:44px;height:47px;background:#f5f5f5;"><div class="tdc">15</div></div>
<div class="tc" style="left:146px;top:1127px;width:313px;height:47px;background:#f5f5f5;"><div class="tdl" style="left:8px"><a style="letter-spacing:0.6px">ルガル </a></div></div>
<div class="tc" style="left:461px;top:1127px;width:77px;height:47px;background:#f5f5f5;"><div class="tdc">牡5</div></div>
<div class="tc" style="left:540px;top:1127px;width:60px;height:47px;background:#f5f5f5;"><div class="tdc">58.0</div></div>
<div class="tc" style="left:602px;top:1127px;width:177px;height:47px;background:#f5f5f5;"><div class="tdl"><a>川田 将雅</a></div></div>
<div class="tc" style="left:781px;top:1127px;width:80px;height:47px;background:#f5f5f5;"><div class="tdc">1:07.7</div></div>
<div class="tc" style="left:863px;top:1127px;width:116px;height:47px;background:#f5f5f5;"><div class="tdl" style="left:8px;font-size:19px">１／２</div></div>
<div class="tc" style="left:981px;top:1127px;width:122px;height:47px;background:#f5f5f5;"><div class="crn"><i>9</i><i>9</i></div></div>
<div class="tc" style="left:1105px;top:1127px;width:60px;height:47px;background:#f5f5f5;"><div class="tdc">33.3</div></div>
<div class="tc" style="left:1167px;top:1127px;width:129px;height:47px;background:#f5f5f5;"><div class="tdl" style="left:8px">522<span class="bwd">(0)</span></div></div>
<div class="tc" style="left:1298px;top:1127px;width:181px;height:47px;background:#f5f5f5;"><div class="tdl"><a>杉山 晴紀</a></div></div>
<div class="tc" style="left:1481px;top:1127px;width:51px;height:47px;background:#f5f5f5;"><div class="tdc">4</div></div>
<div class="tc" style="left:2px;top:1176px;width:53px;height:47px;background:#fff;"><div class="tdc">13</div></div>
<div class="tc" style="left:57px;top:1176px;width:41px;height:47px;background:#fff;"><div class="waku" style="background:#1f6fc5;color:#fff;">4</div></div>
<div class="tc" style="left:100px;top:1176px;width:44px;height:47px;background:#fff;"><div class="tdc">8</div></div>
<div class="tc" style="left:146px;top:1176px;width:313px;height:47px;background:#fff;"><div class="tdl" style="left:8px"><a style="letter-spacing:0.6px">ペアポルックス </a></div></div>
<div class="tc" style="left:461px;top:1176px;width:77px;height:47px;background:#fff;"><div class="tdc">牡4</div></div>
<div class="tc" style="left:540px;top:1176px;width:60px;height:47px;background:#fff;"><div class="tdc">58.0</div></div>
<div class="tc" style="left:602px;top:1176px;width:177px;height:47px;background:#fff;"><div class="tdl"><a>松若 風馬</a></div></div>
<div class="tc" style="left:781px;top:1176px;width:80px;height:47px;background:#fff;"><div class="tdc">1:07.7</div></div>
<div class="tc" style="left:863px;top:1176px;width:116px;height:47px;background:#fff;"><div class="tdl" style="left:8px;font-size:19px">ハナ</div></div>
<div class="tc" style="left:981px;top:1176px;width:122px;height:47px;background:#fff;"><div class="crn"><i>16</i><i>14</i></div></div>
<div class="tc" style="left:1105px;top:1176px;width:60px;height:47px;background:#fff;"><div class="tdc">32.8</div></div>
<div class="tc" style="left:1167px;top:1176px;width:129px;height:47px;background:#fff;"><div class="tdl" style="left:8px">472<span class="bwd">(-4)</span></div></div>
<div class="tc" style="left:1298px;top:1176px;width:181px;height:47px;background:#fff;"><div class="tdl"><a>梅田 智之</a></div></div>
<div class="tc" style="left:1481px;top:1176px;width:51px;height:47px;background:#fff;"><div class="tdc">12</div></div>
<div class="tc" style="left:2px;top:1225px;width:53px;height:47px;background:#f5f5f5;"><div class="tdc">14</div></div>
<div class="tc" style="left:57px;top:1225px;width:41px;height:47px;background:#f5f5f5;"><div class="waku" style="background:#fde23a;color:#222;">5</div></div>
<div class="tc" style="left:100px;top:1225px;width:44px;height:47px;background:#f5f5f5;"><div class="tdc">9</div></div>
<div class="tc" style="left:146px;top:1225px;width:313px;height:47px;background:#f5f5f5;"><div class="tdl" style="left:8px"><a style="letter-spacing:0.6px">ドロップオブライト </a></div></div>
<div class="tc" style="left:461px;top:1225px;width:77px;height:47px;background:#f5f5f5;"><div class="tdc">牝6</div></div>
<div class="tc" style="left:540px;top:1225px;width:60px;height:47px;background:#f5f5f5;"><div class="tdc">56.0</div></div>
<div class="tc" style="left:602px;top:1225px;width:177px;height:47px;background:#f5f5f5;"><div class="tdl"><a>丹内 祐次</a></div></div>
<div class="tc" style="left:781px;top:1225px;width:80px;height:47px;background:#f5f5f5;"><div class="tdc">1:07.8</div></div>
<div class="tc" style="left:863px;top:1225px;width:116px;height:47px;background:#f5f5f5;"><div class="tdl" style="left:8px;font-size:19px">３／４</div></div>
<div class="tc" style="left:981px;top:1225px;width:122px;height:47px;background:#f5f5f5;"><div class="crn"><i>13</i><i>12</i></div></div>
<div class="tc" style="left:1105px;top:1225px;width:60px;height:47px;background:#f5f5f5;"><div class="tdc">33.1</div></div>
<div class="tc" style="left:1167px;top:1225px;width:129px;height:47px;background:#f5f5f5;"><div class="tdl" style="left:8px">448<span class="bwd">(+2)</span></div></div>
<div class="tc" style="left:1298px;top:1225px;width:181px;height:47px;background:#f5f5f5;"><div class="tdl"><a>福永 祐一</a></div></div>
<div class="tc" style="left:1481px;top:1225px;width:51px;height:47px;background:#f5f5f5;"><div class="tdc">16</div></div>
<div class="tc" style="left:2px;top:1274px;width:53px;height:47px;background:#fff;"><div class="tdc">15</div></div>
<div class="tc" style="left:57px;top:1274px;width:41px;height:47px;background:#fff;"><div class="waku" style="background:#2a7a34;color:#fff;">6</div></div>
<div class="tc" style="left:100px;top:1274px;width:44px;height:47px;background:#fff;"><div class="tdc">12</div></div>
<div class="tc" style="left:146px;top:1274px;width:313px;height:47px;background:#fff;"><div class="tdl" style="left:8px"><a style="letter-spacing:0.6px">ヤマニンアルリフラ </a></div></div>
<div class="tc" style="left:461px;top:1274px;width:77px;height:47px;background:#fff;"><div class="tdc">牡4</div></div>
<div class="tc" style="left:540px;top:1274px;width:60px;height:47px;background:#fff;"><div class="tdc">58.0</div></div>
<div class="tc" style="left:602px;top:1274px;width:177px;height:47px;background:#fff;"><div class="tdl"><a>団野 大成</a></div></div>
<div class="tc" style="left:781px;top:1274px;width:80px;height:47px;background:#fff;"><div class="tdc">1:08.2</div></div>
<div class="tc" style="left:863px;top:1274px;width:116px;height:47px;background:#fff;"><div class="tdl" style="left:8px;font-size:19px">２</div></div>
<div class="tc" style="left:981px;top:1274px;width:122px;height:47px;background:#fff;"><div class="crn"><i>13</i><i>14</i></div></div>
<div class="tc" style="left:1105px;top:1274px;width:60px;height:47px;background:#fff;"><div class="tdc">33.4</div></div>
<div class="tc" style="left:1167px;top:1274px;width:129px;height:47px;background:#fff;"><div class="tdl" style="left:8px">498<span class="bwd">(+4)</span></div></div>
<div class="tc" style="left:1298px;top:1274px;width:181px;height:47px;background:#fff;"><div class="tdl"><a>斉藤 崇史</a></div></div>
<div class="tc" style="left:1481px;top:1274px;width:51px;height:47px;background:#fff;"><div class="tdc">15</div></div>
<div class="tc" style="left:2px;top:1323px;width:53px;height:47px;background:#f5f5f5;"><div class="tdc">16</div></div>
<div class="tc" style="left:57px;top:1323px;width:41px;height:47px;background:#f5f5f5;"><div class="waku" style="background:#f9a12a;color:#222;">7</div></div>
<div class="tc" style="left:100px;top:1323px;width:44px;height:47px;background:#f5f5f5;"><div class="tdc">14</div></div>
<div class="tc" style="left:146px;top:1323px;width:313px;height:47px;background:#f5f5f5;"><div class="tdl" style="left:8px"><a style="letter-spacing:0.6px">カピリナ </a></div></div>
<div class="tc" style="left:461px;top:1323px;width:77px;height:47px;background:#f5f5f5;"><div class="tdc">牝4</div></div>
<div class="tc" style="left:540px;top:1323px;width:60px;height:47px;background:#f5f5f5;"><div class="tdc">56.0</div></div>
<div class="tc" style="left:602px;top:1323px;width:177px;height:47px;background:#f5f5f5;"><div class="tdl"><a>戸崎 圭太</a></div></div>
<div class="tc" style="left:781px;top:1323px;width:80px;height:47px;background:#f5f5f5;"><div class="tdc">1:08.2</div></div>
<div class="tc" style="left:863px;top:1323px;width:116px;height:47px;background:#f5f5f5;"><div class="tdl" style="left:8px;font-size:19px">１／２</div></div>
<div class="tc" style="left:981px;top:1323px;width:122px;height:47px;background:#f5f5f5;"><div class="crn"><i>6</i><i>5</i></div></div>
<div class="tc" style="left:1105px;top:1323px;width:60px;height:47px;background:#f5f5f5;"><div class="tdc">34.0</div></div>
<div class="tc" style="left:1167px;top:1323px;width:129px;height:47px;background:#f5f5f5;"><div class="tdl" style="left:8px">480<span class="bwd">(+6)</span></div></div>
<div class="tc" style="left:1298px;top:1323px;width:181px;height:47px;background:#f5f5f5;"><div class="tdl"><a>田島 俊明</a></div></div>
<div class="tc" style="left:1481px;top:1323px;width:51px;height:47px;background:#f5f5f5;"><div class="tdc">9</div></div>
<style>
.h2{position:absolute;left:2px;font-weight:bold;color:#444;white-space:nowrap;-webkit-text-stroke:0.5px #444}
.kv{position:absolute;font-size:21px;letter-spacing:0.6px;color:#333;white-space:nowrap;line-height:45px}
.hl{display:inline-block;background:#3445a9;color:#fff;font-weight:bold;padding:0 5px;margin:0 3px 0 2px;line-height:27.5px;font-size:22px;letter-spacing:0.5px}
.pc{position:absolute;background:#f6f6f6;font-size:23px;color:#333;white-space:nowrap;line-height:44px}
.pl{position:absolute;background:#e8e8df;font-size:21px;font-weight:bold;color:#555;-webkit-text-stroke:0.5px #555;text-align:center;white-space:nowrap}
.yen{font-size:17px;margin-left:2px}
.nin{font-size:18px;margin-left:3px;letter-spacing:0.5px}
</style>
<div class="h2" style="top:1400px;font-size:20px">タイム</div>
<div class="abs" style="left:0;top:1436px;width:1536px;height:96px;background:#d0d0d0"></div>
<div class="abs" style="left:2px;top:1438px;width:210px;height:45px;background:#eceef0"></div>
<div class="abs" style="left:214px;top:1438px;width:1322px;height:45px;background:#fff"></div>
<div class="kv" style="left:18px;top:1438px;font-size:19px;letter-spacing:0.2px">ハロンタイム</div>
<div class="kv" style="left:231px;top:1438px">12.0 - 10.7 - 11.0 - 11.2 - 10.6 - 11.4</div>
<div class="abs" style="left:2px;top:1485px;width:210px;height:45px;background:#eceef0"></div>
<div class="abs" style="left:214px;top:1485px;width:1322px;height:45px;background:#fff"></div>
<div class="kv" style="left:18px;top:1485px;font-size:19px;letter-spacing:0.2px">上り</div>
<div class="kv" style="left:231px;top:1485px">4F 44.2 - 3F 33.2</div>
<div class="h2" style="top:1559px;font-size:21px">コーナー通過順位</div>
<div class="abs" style="left:0;top:1596px;width:1536px;height:96px;background:#d0d0d0"></div>
<div class="abs" style="left:2px;top:1598px;width:210px;height:45px;background:#eceef0"></div>
<div class="abs" style="left:214px;top:1598px;width:1322px;height:45px;background:#fff"></div>
<div class="kv" style="left:18px;top:1598px;font-size:19px;letter-spacing:0.2px">3コーナー</div>
<div class="kv" style="left:231px;top:1598px"><span style="letter-spacing:0.3px">13,<span class="hl">16</span>(1,11)4(2,7,14)(10,15)(3,6)(12,5,9)8</span></div>
<div class="abs" style="left:2px;top:1645px;width:210px;height:45px;background:#eceef0"></div>
<div class="abs" style="left:214px;top:1645px;width:1322px;height:45px;background:#fff"></div>
<div class="kv" style="left:18px;top:1645px;font-size:19px;letter-spacing:0.2px">4コーナー</div>
<div class="kv" style="left:231px;top:1645px"><span style="letter-spacing:0.3px">(*13,<span class="hl" style="margin-right:0">16</span>)(1,11)(4,14)(2,7)(6,15)10(3,9)(12,5,8)</span></div>
<div class="h2" style="top:1748px;font-size:26px">払戻金</div>
<div class="abs" style="left:0;top:1797px;width:1536px;height:3px;background:#e2e2e2"></div>
<div class="abs" style="left:0;top:1797px;width:196px;height:3px;background:#1ea83c"></div>
<div class="abs" style="left:0;top:1825px;width:1536px;height:184.5px;background:#d2d2d2"></div>
<div class="pl" style="left:1.5px;top:1826.5px;width:81.5px;height:44px;line-height:44px">単勝</div>
<div class="pl" style="left:1.5px;top:1872px;width:81.5px;height:135.5px;line-height:135.5px">複勝</div>
<div class="abs" style="left:85px;top:1872px;width:123px;height:135.5px;background:#f6f6f6"></div>
<div class="abs" style="left:209.5px;top:1872px;width:171.5px;height:135.5px;background:#f6f6f6"></div>
<div class="abs" style="left:382.5px;top:1872px;width:128.5px;height:135.5px;background:#f6f6f6"></div>
<div class="pc" style="left:85px;top:1826.5px;width:123px;height:44px;text-align:center">16</div>
<div class="pc" style="left:209.5px;top:1826.5px;width:171.5px;height:44px;text-align:right;padding-right:8px">5,000<span class="yen">円</span></div>
<div class="pc" style="left:382.5px;top:1826.5px;width:128.5px;height:44px;text-align:right;padding-right:7px">11<span class="nin">番人気</span></div>
<div class="pc" style="left:85px;top:1872px;width:123px;height:44.7px;text-align:center">16</div>
<div class="pc" style="left:209.5px;top:1872px;width:171.5px;height:44.7px;text-align:right;padding-right:8px">1,250<span class="yen">円</span></div>
<div class="pc" style="left:382.5px;top:1872px;width:128.5px;height:44.7px;text-align:right;padding-right:7px">12<span class="nin">番人気</span></div>
<div class="pc" style="left:85px;top:1918px;width:123px;height:44.7px;text-align:center">13</div>
<div class="pc" style="left:209.5px;top:1918px;width:171.5px;height:44.7px;text-align:right;padding-right:8px">540<span class="yen">円</span></div>
<div class="pc" style="left:382.5px;top:1918px;width:128.5px;height:44.7px;text-align:right;padding-right:7px">7<span class="nin">番人気</span></div>
<div class="pc" style="left:85px;top:1964px;width:123px;height:44.6px;text-align:center">6</div>
<div class="pc" style="left:209.5px;top:1964px;width:171.5px;height:44.6px;text-align:right;padding-right:8px">210<span class="yen">円</span></div>
<div class="pc" style="left:382.5px;top:1964px;width:128.5px;height:44.6px;text-align:right;padding-right:7px">2<span class="nin">番人気</span></div>
<div class="abs" style="left:85px;top:1916.5px;width:123px;height:1.5px;background:repeating-linear-gradient(90deg,#c8c8c8 0 6px,transparent 6px 10px)"></div>
<div class="abs" style="left:209.5px;top:1916.5px;width:171.5px;height:1.5px;background:repeating-linear-gradient(90deg,#c8c8c8 0 6px,transparent 6px 10px)"></div>
<div class="abs" style="left:382.5px;top:1916.5px;width:128.5px;height:1.5px;background:repeating-linear-gradient(90deg,#c8c8c8 0 6px,transparent 6px 10px)"></div>
<div class="abs" style="left:85px;top:1962.5px;width:123px;height:1.5px;background:repeating-linear-gradient(90deg,#c8c8c8 0 6px,transparent 6px 10px)"></div>
<div class="abs" style="left:209.5px;top:1962.5px;width:171.5px;height:1.5px;background:repeating-linear-gradient(90deg,#c8c8c8 0 6px,transparent 6px 10px)"></div>
<div class="abs" style="left:382.5px;top:1962.5px;width:128.5px;height:1.5px;background:repeating-linear-gradient(90deg,#c8c8c8 0 6px,transparent 6px 10px)"></div>
<div class="pl" style="left:513.5px;top:1826.5px;width:81.0px;height:44px;line-height:44px">枠連</div>
<div class="pl" style="left:513.5px;top:1872px;width:81.0px;height:135.5px;line-height:135.5px">ワイド</div>
<div class="abs" style="left:596.5px;top:1872px;width:124.0px;height:135.5px;background:#f6f6f6"></div>
<div class="abs" style="left:722px;top:1872px;width:170px;height:135.5px;background:#f6f6f6"></div>
<div class="abs" style="left:893.5px;top:1872px;width:129.5px;height:135.5px;background:#f6f6f6"></div>
<div class="pc" style="left:596.5px;top:1826.5px;width:124.0px;height:44px;text-align:center">7-8</div>
<div class="pc" style="left:722px;top:1826.5px;width:170px;height:44px;text-align:right;padding-right:8px">3,150<span class="yen">円</span></div>
<div class="pc" style="left:893.5px;top:1826.5px;width:129.5px;height:44px;text-align:right;padding-right:7px">15<span class="nin">番人気</span></div>
<div class="pc" style="left:596.5px;top:1872px;width:124.0px;height:44.7px;text-align:center">13-16</div>
<div class="pc" style="left:722px;top:1872px;width:170px;height:44.7px;text-align:right;padding-right:8px">14,410<span class="yen">円</span></div>
<div class="pc" style="left:893.5px;top:1872px;width:129.5px;height:44.7px;text-align:right;padding-right:7px">79<span class="nin">番人気</span></div>
<div class="pc" style="left:596.5px;top:1918px;width:124.0px;height:44.7px;text-align:center">6-16</div>
<div class="pc" style="left:722px;top:1918px;width:170px;height:44.7px;text-align:right;padding-right:8px">5,850<span class="yen">円</span></div>
<div class="pc" style="left:893.5px;top:1918px;width:129.5px;height:44.7px;text-align:right;padding-right:7px">49<span class="nin">番人気</span></div>
<div class="pc" style="left:596.5px;top:1964px;width:124.0px;height:44.6px;text-align:center">6-13</div>
<div class="pc" style="left:722px;top:1964px;width:170px;height:44.6px;text-align:right;padding-right:8px">2,030<span class="yen">円</span></div>
<div class="pc" style="left:893.5px;top:1964px;width:129.5px;height:44.6px;text-align:right;padding-right:7px">19<span class="nin">番人気</span></div>
<div class="abs" style="left:596.5px;top:1916.5px;width:124.0px;height:1.5px;background:repeating-linear-gradient(90deg,#c8c8c8 0 6px,transparent 6px 10px)"></div>
<div class="abs" style="left:722px;top:1916.5px;width:170px;height:1.5px;background:repeating-linear-gradient(90deg,#c8c8c8 0 6px,transparent 6px 10px)"></div>
<div class="abs" style="left:893.5px;top:1916.5px;width:129.5px;height:1.5px;background:repeating-linear-gradient(90deg,#c8c8c8 0 6px,transparent 6px 10px)"></div>
<div class="abs" style="left:596.5px;top:1962.5px;width:124.0px;height:1.5px;background:repeating-linear-gradient(90deg,#c8c8c8 0 6px,transparent 6px 10px)"></div>
<div class="abs" style="left:722px;top:1962.5px;width:170px;height:1.5px;background:repeating-linear-gradient(90deg,#c8c8c8 0 6px,transparent 6px 10px)"></div>
<div class="abs" style="left:893.5px;top:1962.5px;width:129.5px;height:1.5px;background:repeating-linear-gradient(90deg,#c8c8c8 0 6px,transparent 6px 10px)"></div>
<div class="pl" style="left:1025px;top:1826.5px;width:82.5px;height:44px;line-height:44px">馬連</div>
<div class="pl" style="left:1025px;top:1872px;width:82.5px;height:44.7px;line-height:44.7px">馬単</div>
<div class="pl" style="left:1025px;top:1918px;width:82.5px;height:44.7px;line-height:44.7px">3連複</div>
<div class="pl" style="left:1025px;top:1964px;width:82.5px;height:44.6px;line-height:44.6px">3連単</div>
<div class="pc" style="left:1109px;top:1826.5px;width:123px;height:44px;text-align:center">13-16</div>
<div class="pc" style="left:1233.5px;top:1826.5px;width:170.5px;height:44px;text-align:right;padding-right:8px">60,830<span class="yen">円</span></div>
<div class="pc" style="left:1405.5px;top:1826.5px;width:129.0px;height:44px;text-align:right;padding-right:7px">76<span class="nin">番人気</span></div>
<div class="pc" style="left:1109px;top:1872px;width:123px;height:44.7px;text-align:center">16-13</div>
<div class="pc" style="left:1233.5px;top:1872px;width:170.5px;height:44.7px;text-align:right;padding-right:8px">119,920<span class="yen">円</span></div>
<div class="pc" style="left:1405.5px;top:1872px;width:129.0px;height:44.7px;text-align:right;padding-right:7px">149<span class="nin">番人気</span></div>
<div class="pc" style="left:1109px;top:1918px;width:123px;height:44.7px;text-align:center">6-13-16</div>
<div class="pc" style="left:1233.5px;top:1918px;width:170.5px;height:44.7px;text-align:right;padding-right:8px">116,720<span class="yen">円</span></div>
<div class="pc" style="left:1405.5px;top:1918px;width:129.0px;height:44.7px;text-align:right;padding-right:7px">216<span class="nin">番人気</span></div>
<div class="pc" style="left:1109px;top:1964px;width:123px;height:44.6px;text-align:center">16-13-6</div>
<div class="pc" style="left:1233.5px;top:1964px;width:170.5px;height:44.6px;text-align:right;padding-right:8px">1,301,150<span class="yen">円</span></div>
<div class="pc" style="left:1405.5px;top:1964px;width:129.0px;height:44.6px;text-align:right;padding-right:7px">1576<span class="nin">番人気</span></div>
<div class="abs" style="left:0;top:2034px;width:1536px;height:14px;background:#f3f3f3;border-top:2px dashed #d0d0d0"></div>
</body></html>
